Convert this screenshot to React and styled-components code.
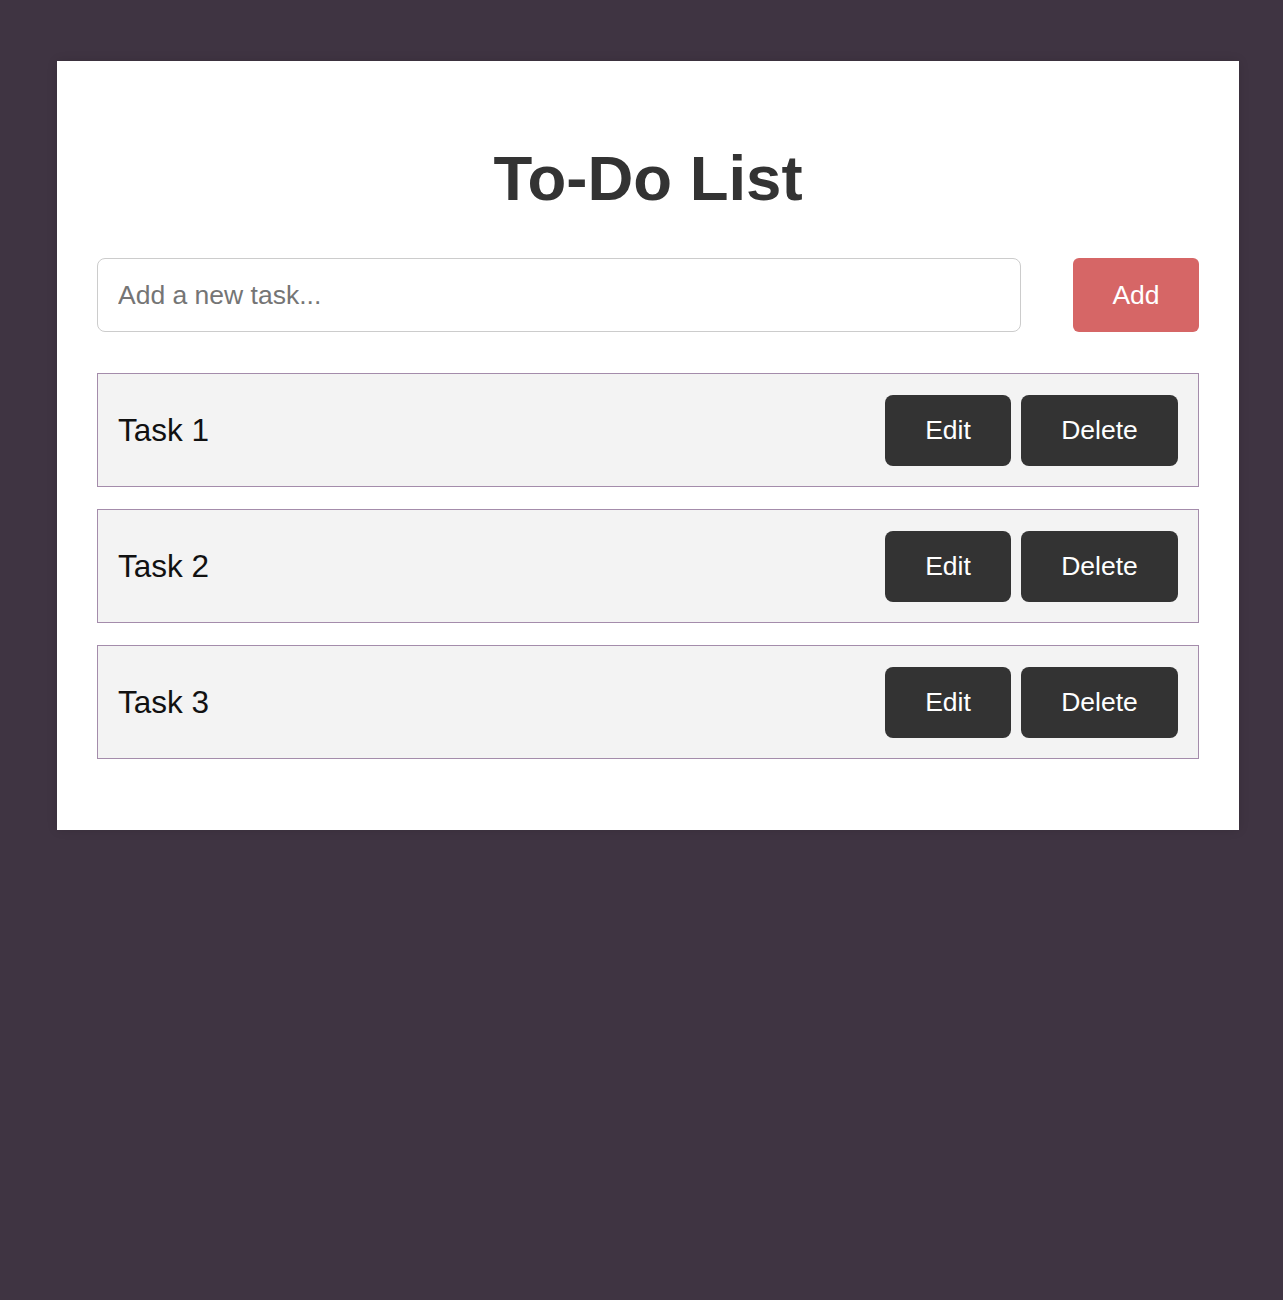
import styled, { createGlobalStyle } from "styled-components";

const GlobalStyle = createGlobalStyle`
   body {
      margin: 0;
      background: #3f3442;
      font-family: "Liberation Sans", Arial, sans-serif;
   }
`;

const Page = styled.div`
   min-height: 1300px;
   padding: 61px 0 0 57px;
   box-sizing: border-box;
`;

const Card = styled.div`
   width: 1182px;
   box-sizing: border-box;
   padding: 40px 40px 71px;
   background: #fff;
   box-shadow: 0 0 10px rgba(0, 0, 0, 0.12);
`;

const Title = styled.h1`
   margin: 42px 0 44px;
   text-align: center;
   font-size: 63.5px;
   font-weight: 700;
   line-height: 71px;
   color: #333;
`;

const Form = styled.form`
   display: flex;
   gap: 52px;
   margin-bottom: 41px;
`;

const Input = styled.input`
   flex: 1;
   height: 74px;
   box-sizing: border-box;
   padding: 0 20px;
   border: 1px solid #ccc;
   border-radius: 8px;
   font-family: inherit;
   font-size: 26.5px;
   color: #333;
   outline: none;

   &::placeholder {
      color: #757575;
   }
`;

const Button = styled.button`
   border: none;
   border-radius: ${(p) => (p.$primary ? "6px" : "8px")};
   background: ${(p) => (p.$primary ? "#d66666" : "#333")};
   color: #fff;
   font-family: inherit;
   font-size: 26.5px;
   cursor: pointer;
`;

const AddButton = styled(Button)`
   width: 126px;
   height: 74px;
`;

const List = styled.ul`
   list-style: none;
   margin: 0;
   padding: 0;
   display: flex;
   flex-direction: column;
   gap: 22px;
`;

const Row = styled.li`
   display: flex;
   align-items: center;
   justify-content: space-between;
   height: 114px;
   box-sizing: border-box;
   padding: 0 20px 0 20px;
   background: #f3f3f3;
   border: 1px solid #a48cab;
`;

const TaskText = styled.span`
   font-size: 31.5px;
   color: #111;
`;

const Actions = styled.div`
   display: flex;
   gap: 10px;
`;

const RowButton = styled(Button)`
   height: 71px;
   padding: 0 40px;
   min-width: ${(p) => (p.$wide ? "157px" : "126px")};
`;

const tasks = ["Task 1", "Task 2", "Task 3"];

export default function App() {
   return (
      <>
         <GlobalStyle />
         <Page>
            <Card>
               <Title>To-Do List</Title>
               <Form onSubmit={(e) => e.preventDefault()}>
                  <Input placeholder="Add a new task..." />
                  <AddButton $primary type="submit">
                     Add
                  </AddButton>
               </Form>
               <List>
                  {tasks.map((t) => (
                     <Row key={t}>
                        <TaskText>{t}</TaskText>
                        <Actions>
                           <RowButton>Edit</RowButton>
                           <RowButton $wide>Delete</RowButton>
                        </Actions>
                     </Row>
                  ))}
               </List>
            </Card>
         </Page>
      </>
   );
}
